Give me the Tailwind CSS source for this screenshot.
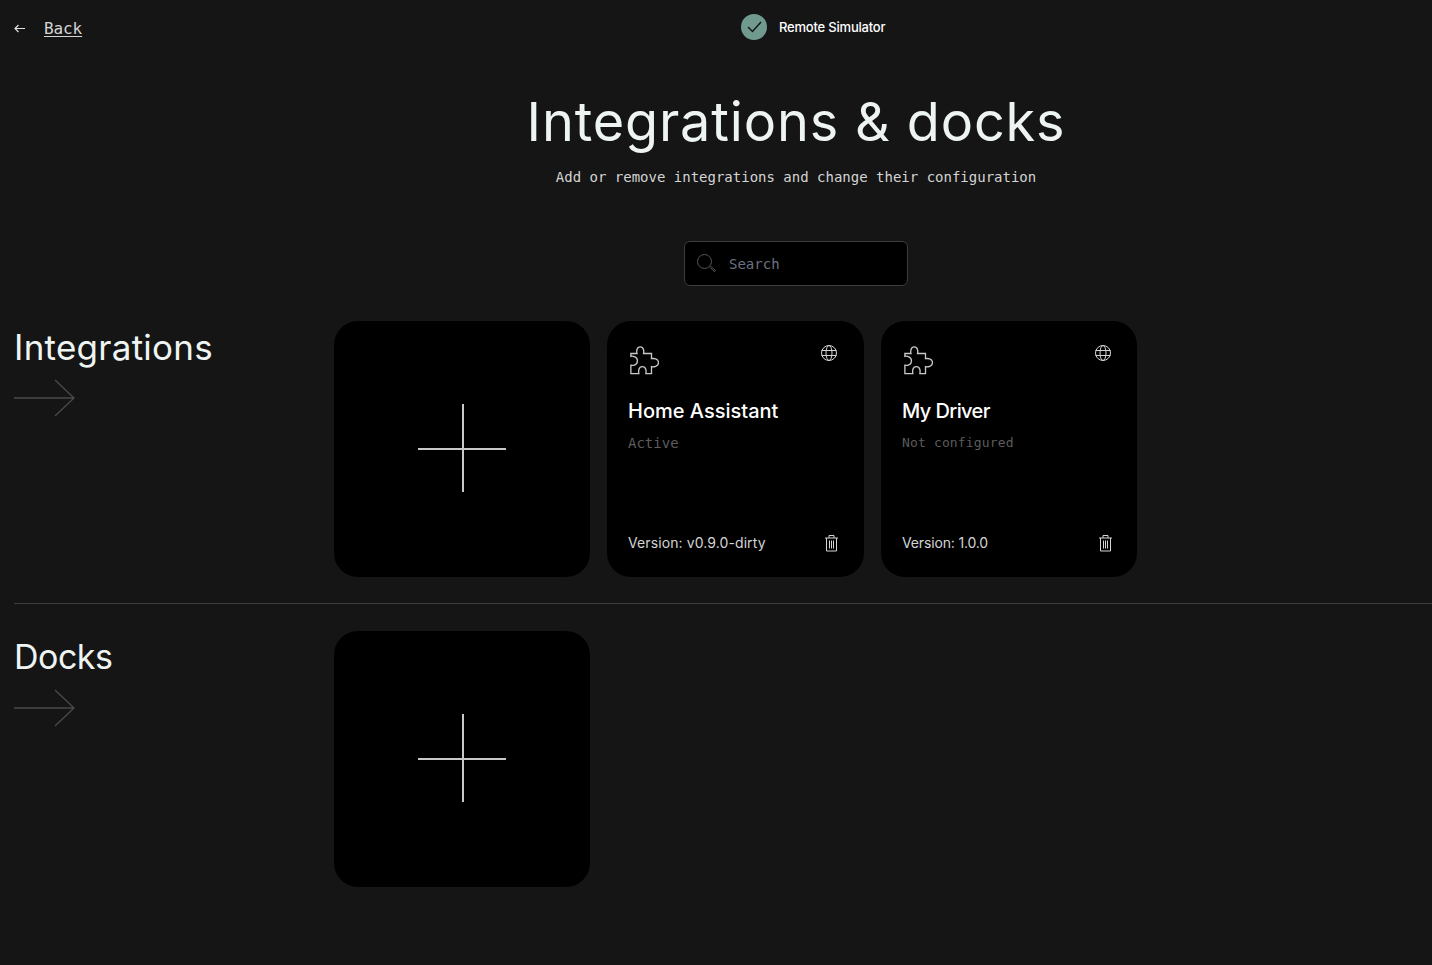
<!DOCTYPE html>
<html lang="en">
<head>
    <meta charset="UTF-8">
    <meta name="viewport" content="width=device-width, initial-scale=1.0">
    <title>Integrations &amp; docks</title>
    <script src="https://cdn.jsdelivr.net/npm/@tailwindcss/browser@4"></script>
</head>
<body class="bg-[#151515] min-h-screen overflow-hidden font-['Inter',sans-serif] text-white">
    <header class="h-[56px] flex items-center relative">
        <a href="#" class="flex items-center pl-[14px] text-[#d4d4d4]">
            <svg class="w-[11px] h-[9px] mr-[19px]" viewBox="0 0 11 9" fill="none" stroke="#e0e0e0" stroke-width="1.2"><path d="M11 4.500H1M4.500 1 1 4.500 4.500 8"/></svg>
            <span class="font-['DejaVu_Sans_Mono',monospace] text-[16px] tracking-[-0.1px] underline underline-offset-2 pt-[2px]">Back</span>
        </a>
        <div class="absolute left-[741px] top-[14px] flex items-center gap-[12px]">
            <div class="w-[26px] h-[26px] rounded-full bg-[#6f9a8d] flex items-center justify-center">
                <svg class="w-[15px] h-[12px]" viewBox="0 0 15 12" fill="none" stroke="#111" stroke-width="1.400"><path d="M1 6 5.500 10.500 14 1"/></svg>
            </div>
            <span class="text-[13px] font-medium tracking-[-0.2px] pt-[1px]">Remote Simulator</span>
        </div>
    </header>

    <section class="pl-[160px] text-center">
        <h1 class="mt-[31px] text-[54px] leading-[70px] font-normal text-[#eef4f2] tracking-[0.85px]">Integrations &amp; docks</h1>
        <p class="mt-[10px] font-['DejaVu_Sans_Mono',monospace] text-[14px] leading-[20px] text-[#d4d4d4]">Add or remove integrations and change their configuration</p>
        <div class="mt-[54px] mx-auto w-[224px] h-[45px] bg-black border border-[#3c3c3c] rounded-[6px] flex items-center pl-[12px] text-left">
            <svg class="w-[20px] h-[20px] mr-[12px]" viewBox="0 0 20 20" fill="none" stroke="#555"><circle cx="7.500" cy="7.500" r="7"/><path d="M12.500 13l5.500 5M13.500 12l5.500 5"/></svg>
            <span class="font-['DejaVu_Sans_Mono',monospace] text-[14px] text-[#6b7280] pt-[2px]">Search</span>
        </div>
    </section>

    <section class="mt-[35px] pl-[14px] flex">
        <div class="w-[320px]">
            <h2 class="text-[35px] leading-[52px] font-normal text-[#eef4f2] tracking-[0.25px]">Integrations</h2>
            <svg class="mt-[6px] w-[62px] h-[38px]" viewBox="0 0 62 38" fill="none" stroke="#4a4a4a" stroke-width="1.300"><path d="M0 19H60M41 1l19 18-19 18"/></svg>
        </div>
        <div class="flex gap-[17px]">
            <button class="w-[256px] h-[256px] rounded-[24px] bg-black relative">
                <span class="absolute left-[84px] top-[127px] w-[88px] h-[2px] bg-[#c8c8c8]"></span>
                <span class="absolute left-[128px] top-[83px] w-[2px] h-[88px] bg-[#c8c8c8]"></span>
            </button>
            <article class="w-[257px] h-[256px] rounded-[24px] bg-black px-[21px] flex flex-col relative">
                <svg class="absolute left-[22px] top-[25px] w-[30px] h-[30px]" viewBox="0 0 32 32" fill="none" stroke="#c8c8c8" stroke-width="1.400"><path d="M2 8H8.500C8 6 8 1 12 1C16 1 16 6 15.500 8H24V13.500C26 13 31.500 13.500 31.500 17.700C31.500 22 26 22.500 24 22V29.500H18C18.500 27 18.500 22 14.300 22C10 22 10 27 10.500 29.500H2V20.500C4 21 9 20.500 9 15.700C9 11.500 4 10.500 2 11Z"/></svg>
                <svg class="absolute right-[26px] top-[23px] w-[18px] h-[18px]" viewBox="0 0 18 18" fill="none" stroke="#d4d4d4"><circle cx="9" cy="9" r="7.500"/><ellipse cx="9" cy="9" rx="3" ry="7.500"/><path d="M1.500 6.500h15M1.500 11.500h15"/></svg>
                <h3 class="mt-[76px] text-[20px] leading-[28px] font-medium">Home Assistant</h3>
                <p class="mt-[8px] font-['DejaVu_Sans_Mono',monospace] text-[14px] leading-[20px] text-[#5c5c5c]">Active</p>
                <div class="mt-auto mb-[24px] flex items-center justify-between">
                    <span class="text-[14px] leading-[20px] text-[#d4d4d4] tracking-[0.1px]">Version: v0.9.0-dirty</span>
                    <svg class="w-[15px] h-[18px] mr-[4px]" viewBox="0 0 15 18" fill="none" stroke="#d4d4d4"><path d="M1 4h13M5 4V1.500h5V4M2.500 4v13h10V4M5.500 6.500v8M7.500 6.500v8M9.500 6.500v8"/></svg>
                </div>
            </article>
            <article class="w-[256px] h-[256px] rounded-[24px] bg-black px-[21px] flex flex-col relative">
                <svg class="absolute left-[22px] top-[25px] w-[30px] h-[30px]" viewBox="0 0 32 32" fill="none" stroke="#c8c8c8" stroke-width="1.400"><path d="M2 8H8.500C8 6 8 1 12 1C16 1 16 6 15.500 8H24V13.500C26 13 31.500 13.500 31.500 17.700C31.500 22 26 22.500 24 22V29.500H18C18.500 27 18.500 22 14.300 22C10 22 10 27 10.500 29.500H2V20.500C4 21 9 20.500 9 15.700C9 11.500 4 10.500 2 11Z"/></svg>
                <svg class="absolute right-[25px] top-[23px] w-[18px] h-[18px]" viewBox="0 0 18 18" fill="none" stroke="#d4d4d4"><circle cx="9" cy="9" r="7.500"/><ellipse cx="9" cy="9" rx="3" ry="7.500"/><path d="M1.500 6.500h15M1.500 11.500h15"/></svg>
                <h3 class="mt-[76px] text-[20px] leading-[28px] font-medium tracking-[-0.6px]">My Driver</h3>
                <p class="mt-[8px] font-['DejaVu_Sans_Mono',monospace] text-[13px] leading-[20px] text-[#5c5c5c] tracking-[0.15px]">Not configured</p>
                <div class="mt-auto mb-[24px] flex items-center justify-between">
                    <span class="text-[14px] leading-[20px] text-[#d4d4d4] tracking-[-0.15px]">Version: 1.0.0</span>
                    <svg class="w-[15px] h-[18px] mr-[3px]" viewBox="0 0 15 18" fill="none" stroke="#d4d4d4"><path d="M1 4h13M5 4V1.500h5V4M2.500 4v13h10V4M5.500 6.500v8M7.500 6.500v8M9.500 6.500v8"/></svg>
                </div>
            </article>
        </div>
    </section>

    <hr class="mt-[26px] ml-[14px] border-0 h-px bg-[#3c3c3c]">

    <section class="mt-[27px] pl-[14px] flex">
        <div class="w-[320px]">
            <h2 class="text-[34px] leading-[52px] font-normal text-[#eef4f2] tracking-[-0.5px]">Docks</h2>
            <svg class="mt-[6px] w-[62px] h-[38px]" viewBox="0 0 62 38" fill="none" stroke="#4a4a4a" stroke-width="1.300"><path d="M0 19H60M41 1l19 18-19 18"/></svg>
        </div>
        <button class="w-[256px] h-[256px] rounded-[24px] bg-black relative">
            <span class="absolute left-[84px] top-[127px] w-[88px] h-[2px] bg-[#c8c8c8]"></span>
            <span class="absolute left-[128px] top-[83px] w-[2px] h-[88px] bg-[#c8c8c8]"></span>
        </button>
    </section>
</body>
</html>
